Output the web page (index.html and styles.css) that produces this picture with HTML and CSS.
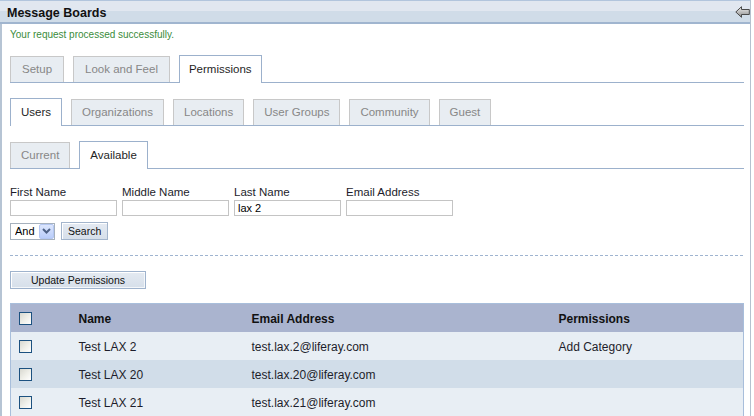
FILE: index.html
```html
<!DOCTYPE html>
<html lang="en">
<head>
    <meta charset="UTF-8">
    <meta name="viewport" content="width=device-width, initial-scale=1.0">
    <title>Message Boards</title>
    <link rel="stylesheet" href="styles.css">
</head>
<body>
    <div class="portlet">
        <div class="portlet-topper">
            <span class="portlet-title">Message Boards</span>
            <a class="portlet-back" href="#" title="Return">
                <svg width="15" height="12" viewBox="0 0 15 12">
                    <defs>
                        <linearGradient id="arrowFill" x1="0" y1="0" x2="0" y2="1">
                            <stop offset="0" stop-color="#f2f2f2"/>
                            <stop offset="1" stop-color="#8a8a8a"/>
                        </linearGradient>
                    </defs>
                    <path d="M0.8 6 L6.5 0.7 L6.5 3.5 L14.3 3.5 L14.3 8.5 L6.5 8.5 L6.5 11.3 Z" fill="url(#arrowFill)" stroke="#4a4a4a" stroke-width="1" stroke-linejoin="miter"/>
                </svg>
            </a>
        </div>
        <div class="portlet-content">
            <div class="msg-success">Your request processed successfully.</div>

            <ul class="tabs tabs-main">
                <li><a href="#">Setup</a></li>
                <li><a href="#">Look and Feel</a></li>
                <li class="current"><a href="#">Permissions</a></li>
            </ul>

            <ul class="tabs tabs-sub">
                <li class="current"><a href="#">Users</a></li>
                <li><a href="#">Organizations</a></li>
                <li><a href="#">Locations</a></li>
                <li><a href="#">User Groups</a></li>
                <li><a href="#">Community</a></li>
                <li><a href="#">Guest</a></li>
            </ul>

            <ul class="tabs tabs-sub">
                <li><a href="#">Current</a></li>
                <li class="current"><a href="#">Available</a></li>
            </ul>

            <form class="search-form" onsubmit="return false;">
                <div class="search-fields">
                    <label class="field"><span>First Name</span><input type="text"></label>
                    <label class="field"><span>Middle Name</span><input type="text"></label>
                    <label class="field"><span>Last Name</span><input type="text" value="lax 2"></label>
                    <label class="field"><span>Email Address</span><input type="text"></label>
                </div>
                <div class="search-actions">
                    <span class="select-box">
                        <select>
                            <option>And</option>
                            <option>Or</option>
                        </select>
                        <span class="select-arrow">
                            <svg width="9" height="6" viewBox="0 0 9 6"><path d="M1 1 L4.5 4.5 L8 1" fill="none" stroke="#4d6185" stroke-width="2"/></svg>
                        </span>
                    </span>
                    <button class="btn" type="button">Search</button>
                </div>
            </form>

            <div class="separator"></div>

            <button class="btn btn-update" type="button">Update Permissions</button>

            <table class="results">
                <colgroup>
                    <col class="col-check">
                    <col class="col-name">
                    <col class="col-email">
                    <col>
                </colgroup>
                <thead>
                    <tr>
                        <th class="check"><input type="checkbox" class="xp-check"></th>
                        <th>Name</th>
                        <th>Email Address</th>
                        <th>Permissions</th>
                    </tr>
                </thead>
                <tbody>
                    <tr>
                        <td class="check"><input type="checkbox" class="xp-check"></td>
                        <td>Test LAX 2</td>
                        <td>test.lax.2@liferay.com</td>
                        <td>Add Category</td>
                    </tr>
                    <tr class="alt">
                        <td class="check"><input type="checkbox" class="xp-check"></td>
                        <td>Test LAX 20</td>
                        <td>test.lax.20@liferay.com</td>
                        <td></td>
                    </tr>
                    <tr>
                        <td class="check"><input type="checkbox" class="xp-check"></td>
                        <td>Test LAX 21</td>
                        <td>test.lax.21@liferay.com</td>
                        <td></td>
                    </tr>
                </tbody>
            </table>
        </div>
    </div>
</body>
</html>
```

FILE: styles.css
```css
body {
    margin: 0;
    font-family: "Liberation Sans", Arial, sans-serif;
    color: #1d1d2b;
    background: #fff;
    overflow: hidden;
}
.portlet {
    margin-right: 3px;
    border-right: 1px solid #b5c1cf;
}
.portlet-topper {
    display: flex;
    align-items: center;
    justify-content: space-between;
    height: 20px;
    padding: 1px 0 0 7px;
    border-top: 1px solid #b2c5dd;
    border-bottom: 2px solid #a0b5cf;
    background: linear-gradient(#e1e7f0 0, #e1e7f0 50%, #d0dce8 50%, #d0dce8 100%);
}
.portlet-title {
    font-size: 12.5px;
    font-weight: bold;
    color: #111;
    padding-top: 2px;
}
.portlet-back {
    display: flex;
    margin-top: -1px;
}
.portlet-content {
    border-left: 2px solid #b6c4d4;
    padding: 4px 6px 0 8px;
}
.msg-success {
    font-size: 10px;
    line-height: 14px;
    color: #3b8c3b;
    margin-bottom: 13px;
}

/* tabs */
.tabs {
    display: flex;
    align-items: flex-end;
    gap: 9px;
    list-style: none;
    margin: 0;
    padding: 0;
    border-bottom: 1px solid #9cb1cc;
}
.tabs li a {
    display: block;
    height: 25px;
    line-height: 25px;
    padding: 0 10px;
    border: 1px solid #c8c8c8;
    border-bottom: none;
    background-color: #e8edf2;
    color: #878787;
    font-size: 11.5px;
    text-decoration: none;
}
.tabs-main li a {
    padding: 0 11px;
}
.tabs li.current {
    margin-bottom: -1px;
}
.tabs li.current a {
    height: 27px;
    line-height: 27px;
    border-color: #9cb1cc;
    background-color: #fff;
    color: #1f1f1f;
}
.tabs-main li.current a {
    padding: 0 9px;
}
.tabs-sub {
    margin-top: 15px;
}

/* search */
.search-form {
    margin-top: 16px;
}
.search-fields {
    display: flex;
    gap: 5px;
}
.field {
    display: flex;
    flex-direction: column;
    width: 107px;
    font-size: 11.5px;
    line-height: 14px;
    color: #1d1d2b;
}
.field input {
    box-sizing: border-box;
    width: 107px;
    height: 16px;
    margin: 1px 0 0 0;
    padding: 0 3px;
    border: 1px solid #c4c4c4;
    font-family: "Liberation Sans", Arial, sans-serif;
    font-size: 11px;
    color: #000;
    outline: none;
}
.search-actions {
    display: flex;
    align-items: center;
    gap: 6px;
    margin-top: 6px;
}
.select-box {
    display: flex;
    box-sizing: border-box;
    width: 45px;
    height: 17px;
    border: 1px solid #a6b1bd;
    background: #fff;
}
.select-box select {
    appearance: none;
    -webkit-appearance: none;
    border: none;
    outline: none;
    background: transparent;
    width: 29px;
    padding: 0 0 0 4px;
    font-family: "Liberation Sans", Arial, sans-serif;
    font-size: 11px;
    color: #000;
}
.select-arrow {
    display: flex;
    align-items: center;
    justify-content: center;
    box-sizing: border-box;
    width: 15px;
    height: 15px;
    border: 1px solid #b4c7f2;
    border-radius: 2px;
    background: linear-gradient(#dce6fd, #b9cdfa);
}
.btn {
    box-sizing: border-box;
    height: 18px;
    padding: 0 6px;
    border: 1px solid #a3b5cc;
    box-shadow: inset 1px 1px 0 #fff;
    background: linear-gradient(#e4eaf2, #d6dfea);
    font-family: "Liberation Sans", Arial, sans-serif;
    font-size: 10.5px;
    color: #111;
    cursor: pointer;
}
.separator {
    margin-top: 15px;
    height: 1px;
    background: repeating-linear-gradient(90deg, #9fb4d0 0, #9fb4d0 3px, transparent 3px, transparent 5px);
}
.btn-update {
    display: block;
    width: 136px;
    margin-top: 15px;
    border-color: #9fb3cd;
    box-shadow: inset 1px 1px 0 #fff, inset -1px -1px 0 #f4f7fa;
}

/* results */
.results {
    width: 100%;
    margin-top: 14px;
    border-collapse: collapse;
    table-layout: fixed;
    border: 1px solid #a8bedb;
    font-size: 12px;
}
.col-check {
    width: 58px;
}
.col-name {
    width: 173px;
}
.col-email {
    width: 307px;
}
.results th,
.results td {
    height: 27px;
    padding: 1px 0 0 10px;
    text-align: left;
    white-space: nowrap;
}
.results th {
    background-color: #aab4cf;
    font-weight: bold;
    color: #111;
}
.results td {
    background-color: #e8eef4;
    color: #1d1d2b;
}
.results tr.alt td {
    background-color: #d1dde9;
}
.results .check {
    padding: 0 0 0 8px;
}
.xp-check {
    appearance: none;
    -webkit-appearance: none;
    display: block;
    width: 13px;
    height: 13px;
    margin: 0;
    border: 1px solid #1c5180;
    background: linear-gradient(135deg, #d8d8d0 0%, #f0f0ea 55%, #fff 100%);
}
```
